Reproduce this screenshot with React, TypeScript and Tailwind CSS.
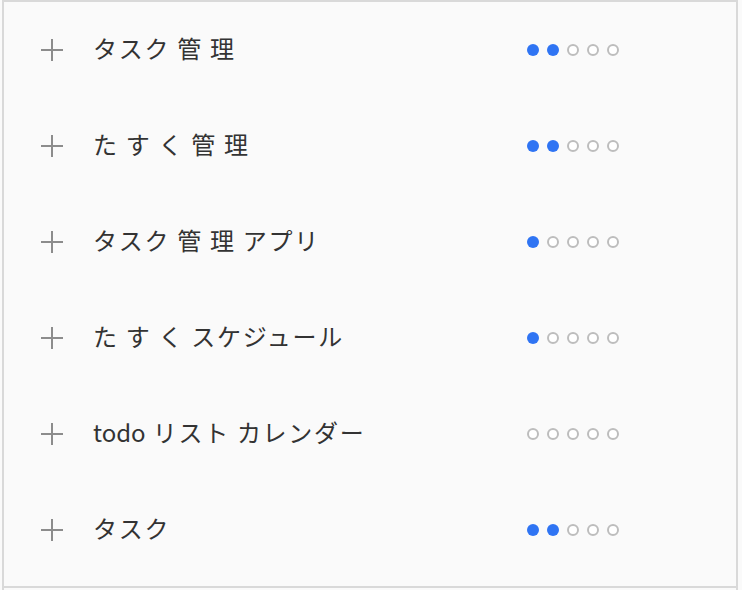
import React from "react";

const rows: { label: string; latin?: string; level: number }[] = [
  { label: "タスク 管 理", level: 2 },
  { label: "た す く 管 理", level: 2 },
  { label: "タスク 管 理 アプリ", level: 1 },
  { label: "た す く スケジュール", level: 1 },
  { latin: "todo", label: " リスト カレンダー", level: 0 },
  { label: "タスク", level: 2 },
];

function Plus() {
  return (
    <svg width="24" height="24" viewBox="0 0 24 24" className="shrink-0">
      <path d="M12 1V23M1 12H23" stroke="#8c8c8c" strokeWidth="2" fill="none" />
    </svg>
  );
}

function Dots({ level }: { level: number }) {
  return (
    <div className="flex items-center gap-[8px]">
      {[0, 1, 2, 3, 4].map((i) =>
        i < level ? (
          <span key={i} className="block w-[12px] h-[12px] rounded-full bg-[#2f74f3]" />
        ) : (
          <span key={i} className="block w-[12px] h-[12px] rounded-full border-2 border-[#bdbdbd] bg-white" />
        )
      )}
    </div>
  );
}

export default function App() {
  return (
    <div className="w-[742px] h-[590px] bg-[#fafafa] overflow-hidden">
      <div
        className="ml-[2px] w-[736px] h-[590px] border-x-2 border-t-2 border-[#d9d9d9] bg-[#fafafa]"
        style={{ fontFamily: '"Noto Sans CJK JP", "Noto Sans", sans-serif' }}
      >
        <div className="border-b-2 border-[#d9d9d9] pb-[8px]">
          {rows.map((r) => (
            <div key={r.label} className="flex items-center h-[96px] pl-[36px] pr-[117px]">
              <Plus />
              <div className="flex-1 ml-[29px] text-[24px] tracking-[1.7px] text-[#333333] leading-none -mt-[5px] whitespace-pre">
                {r.latin && <span className="tracking-[0px]">{r.latin}</span>}
                {r.label}
              </div>
              <Dots level={r.level} />
            </div>
          ))}
        </div>
      </div>
    </div>
  );
}
